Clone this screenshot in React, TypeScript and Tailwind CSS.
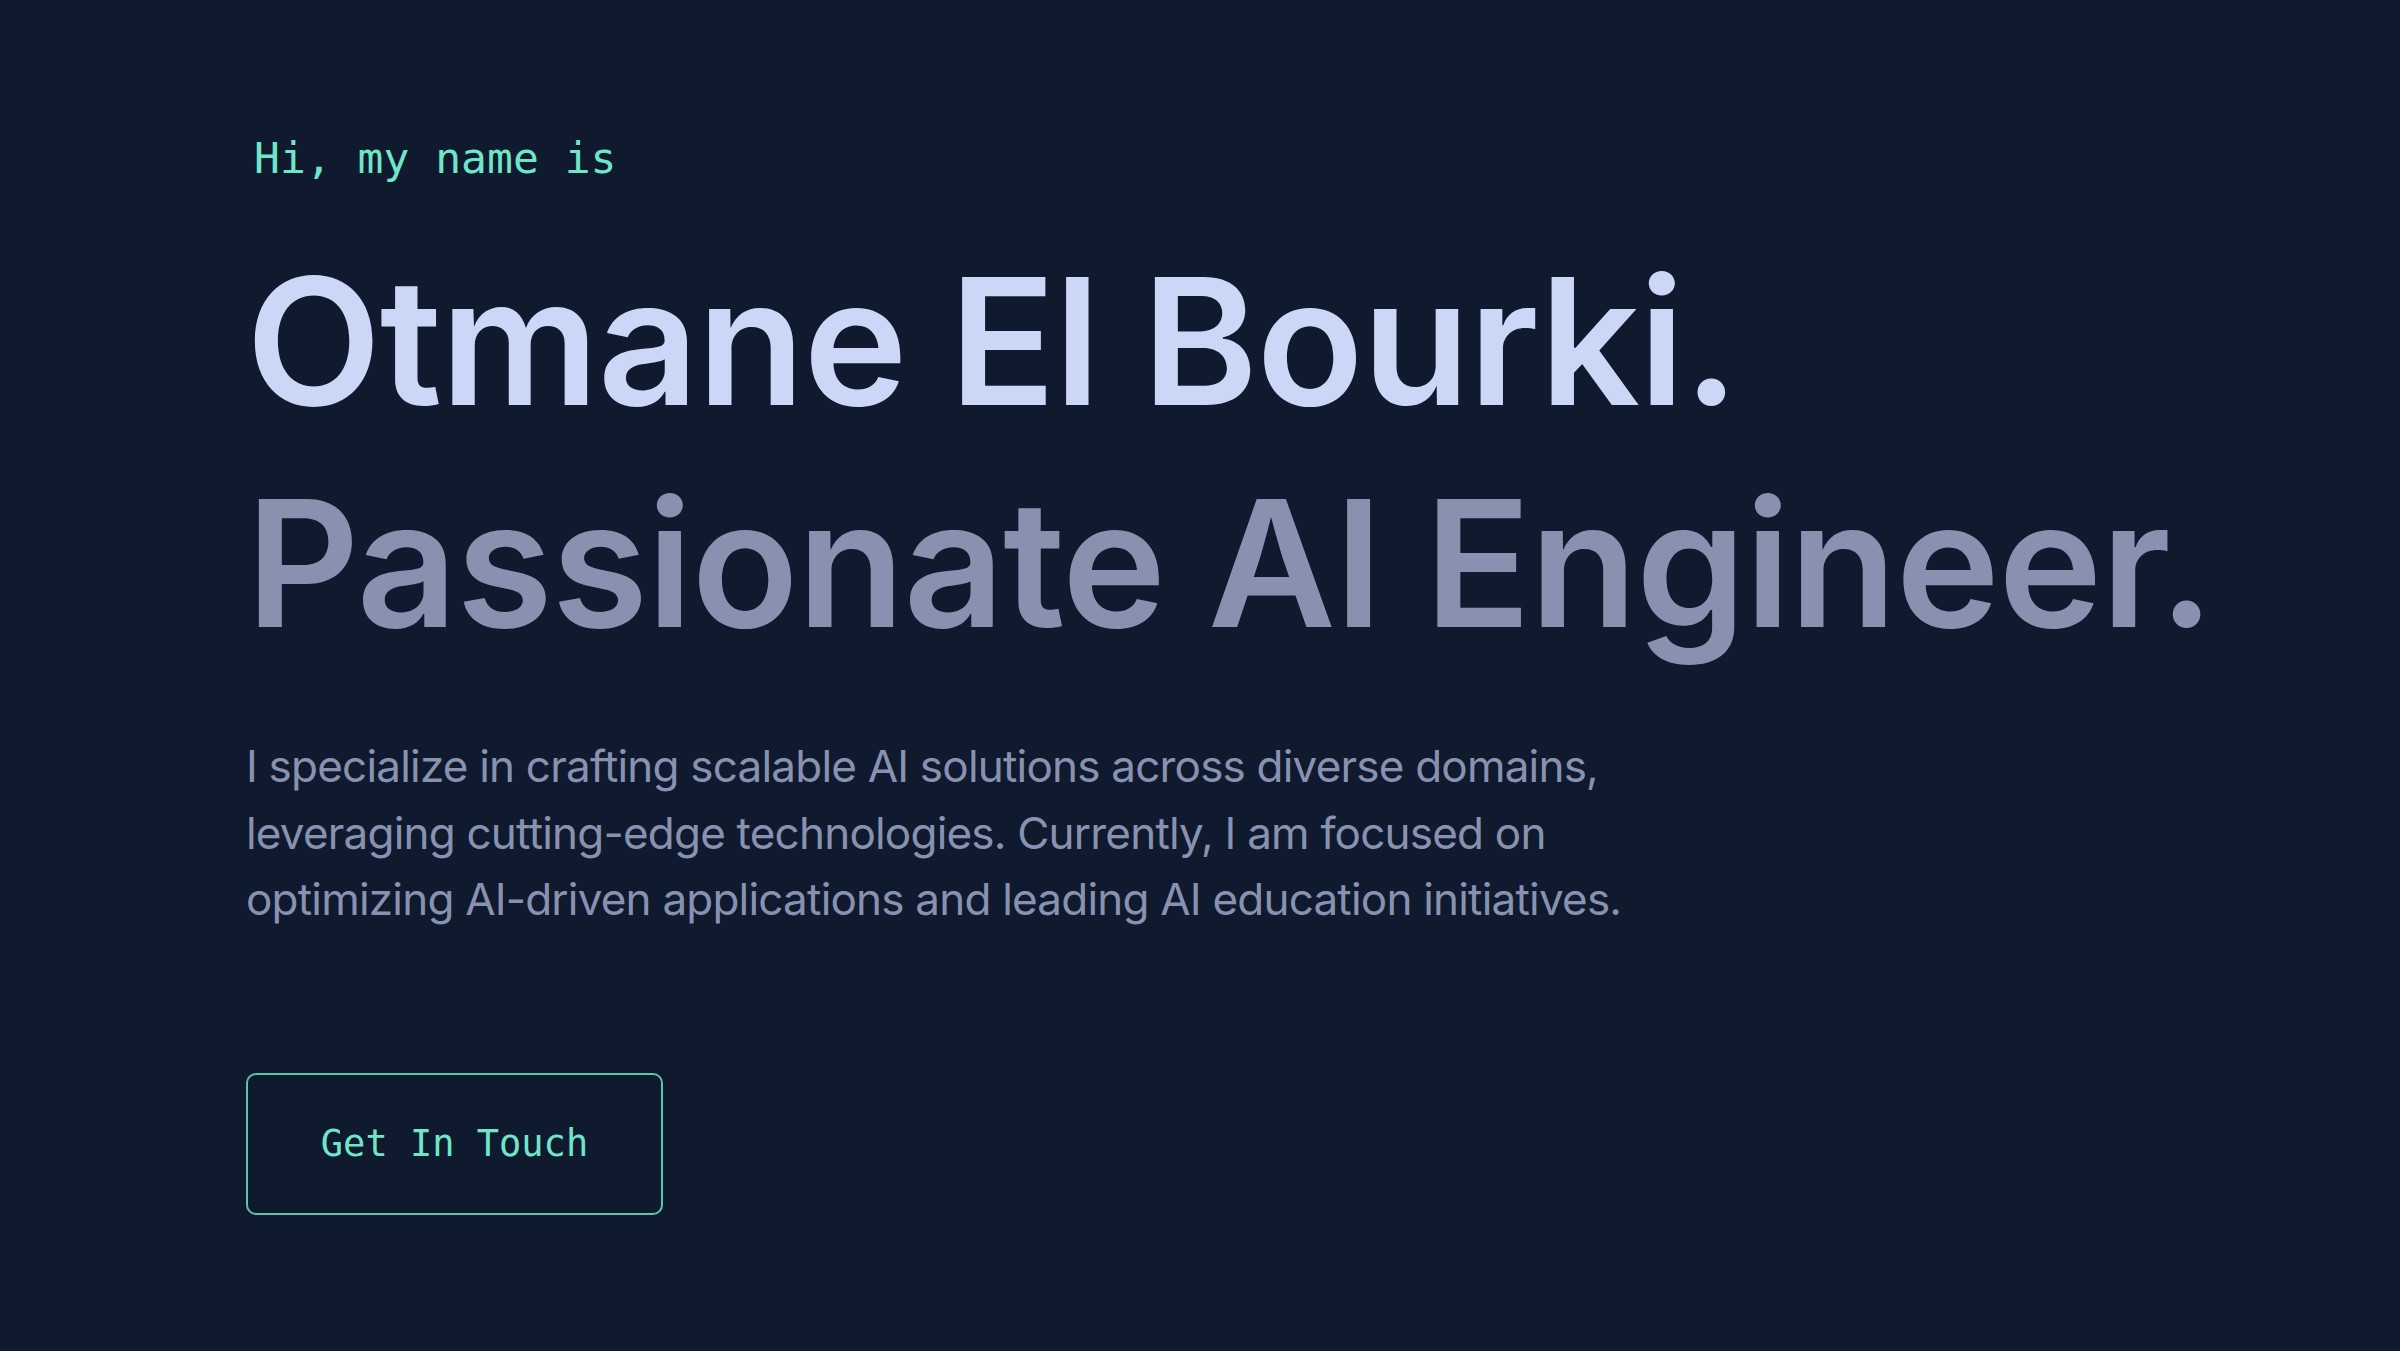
const mono = "font-['DejaVu_Sans_Mono','Liberation_Mono',monospace]";
const sans = "font-['Inter','Noto_Sans',sans-serif]";

export default function App() {
  return (
    <main className="min-h-screen w-full bg-[#0f1a2e]">
      <section className="flex flex-col items-start pl-[246px] pt-[137px]">
        {/* intro */}
        <p className={`${mono} ml-[8px] text-[43px] leading-[42px] text-[#6fe6c7]`}>Hi, my name is</p>

        <h1 className={`${sans} mt-[51px] text-[176px] leading-[222px] font-semibold tracking-[-0.008em] text-[#ccd6f6] whitespace-nowrap`}>
          Otmane El Bourki.
        </h1>
        <h2 className={`${sans} text-[176px] leading-[222px] font-semibold tracking-[-0.008em] text-[#8892b0] whitespace-nowrap`}>
          Passionate AI Engineer.
        </h2>

        {/* bio */}
        <p className={`${sans} mt-[59px] text-[44px] leading-[66.5px] tracking-[-0.018em] text-[#8892b0] whitespace-nowrap`}>
          I specialize in crafting scalable AI solutions across diverse domains,
          <br />
          leveraging cutting-edge technologies. Currently, I am focused on
          <br />
          optimizing AI-driven applications and leading AI education initiatives.
        </p>

        <a
          href="#contact"
          className={`${mono} mt-[140px] flex h-[142px] w-[417px] items-center justify-center rounded-[10px] border-2 border-[#5ec4a8] text-[37px] text-[#6fe6c7]`}
        >
          Get In Touch
        </a>
      </section>
    </main>
  );
}
